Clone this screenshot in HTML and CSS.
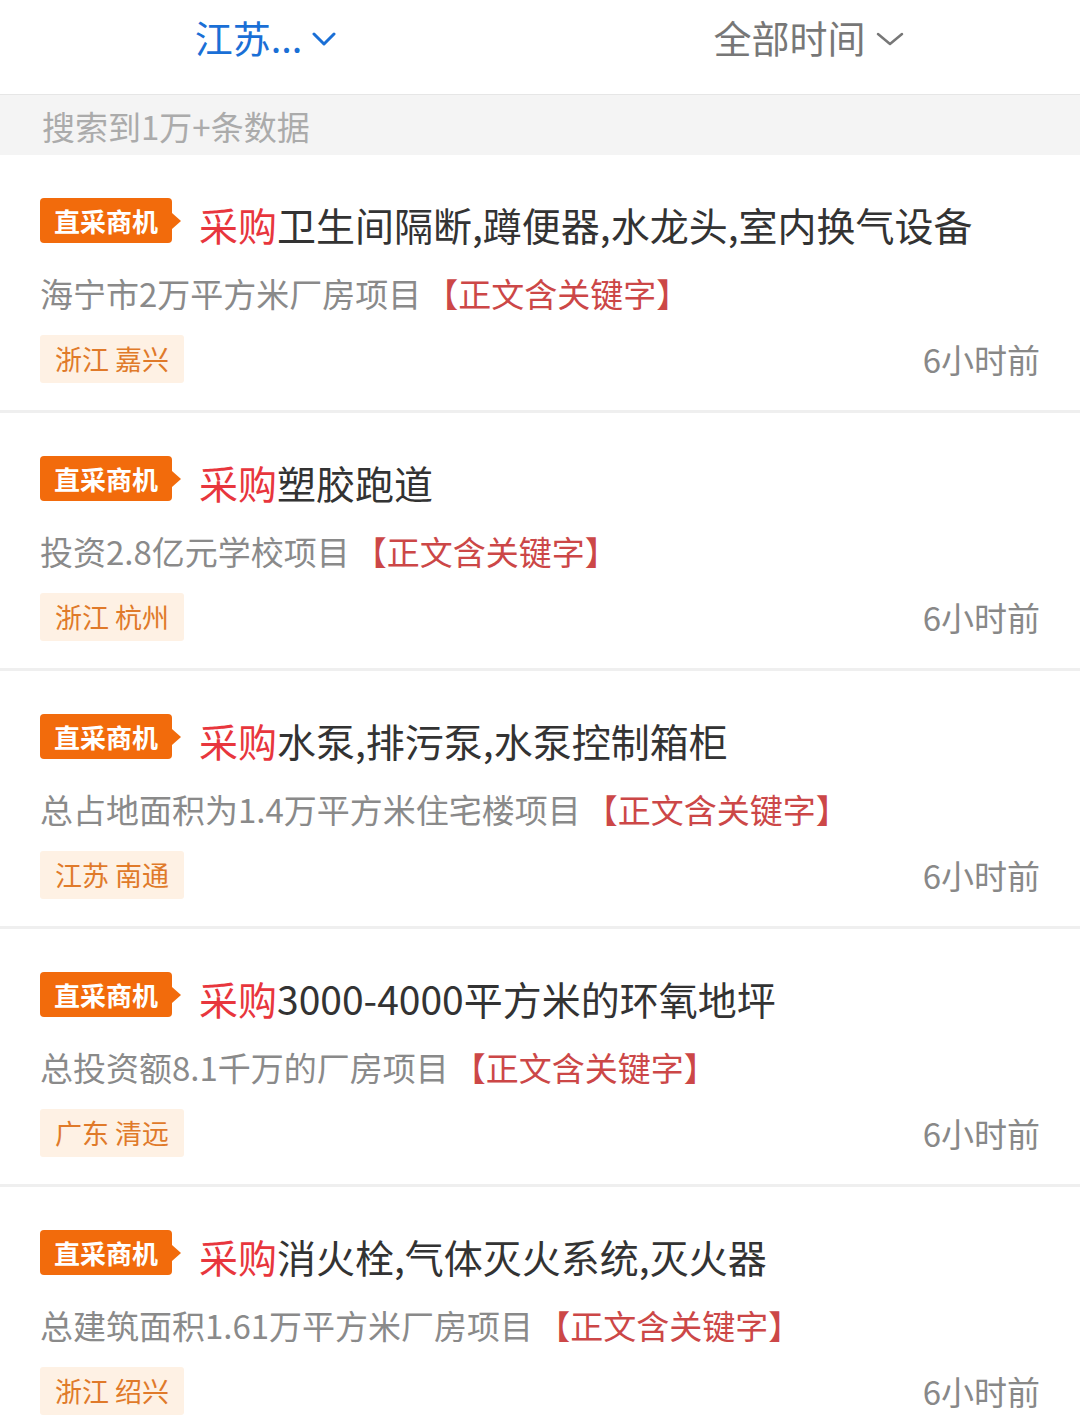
FILE: index.html
```html
<!DOCTYPE html>
<html lang="zh-CN">
<head>
    <meta charset="utf-8">
    <title>直采商机</title>
    <link rel="stylesheet" href="styles.css">
</head>
<body>
    <div class="filter-bar">
        <div class="filter active">
            <span>江苏...</span>
            <svg class="chevron" width="24" height="14" viewBox="0 0 24 14"><path d="M2 2 L12 12 L22 2" fill="none" stroke="currentColor" stroke-width="3" stroke-linecap="round" stroke-linejoin="round"/></svg>
        </div>
        <div class="filter">
            <span>全部时间</span>
            <svg class="chevron" width="28" height="14" viewBox="0 0 28 14"><path d="M2 2 L14 12 L26 2" fill="none" stroke="currentColor" stroke-width="2.5" stroke-linecap="round" stroke-linejoin="round"/></svg>
        </div>
    </div>

    <div class="result-count">搜索到1万+条数据</div>

    <!-- list of opportunities -->
    <div class="list">
        <div class="card">
            <div class="card-head">
                <span class="badge">直采商机</span>
                <span class="title"><em>采购</em>卫生间隔断,蹲便器,水龙头,室内换气设备</span>
            </div>
            <div class="project">海宁市2万平方米厂房项目<span class="keyword">【正文含关键字】</span></div>
            <div class="card-foot">
                <span class="region">浙江 嘉兴</span>
                <span class="time">6小时前</span>
            </div>
        </div>

        <div class="card">
            <div class="card-head">
                <span class="badge">直采商机</span>
                <span class="title"><em>采购</em>塑胶跑道</span>
            </div>
            <div class="project">投资2.8亿元学校项目<span class="keyword">【正文含关键字】</span></div>
            <div class="card-foot">
                <span class="region">浙江 杭州</span>
                <span class="time">6小时前</span>
            </div>
        </div>

        <div class="card">
            <div class="card-head">
                <span class="badge">直采商机</span>
                <span class="title"><em>采购</em>水泵,排污泵,水泵控制箱柜</span>
            </div>
            <div class="project">总占地面积为1.4万平方米住宅楼项目<span class="keyword">【正文含关键字】</span></div>
            <div class="card-foot">
                <span class="region">江苏 南通</span>
                <span class="time">6小时前</span>
            </div>
        </div>

        <div class="card">
            <div class="card-head">
                <span class="badge">直采商机</span>
                <span class="title"><em>采购</em>3000-4000平方米的环氧地坪</span>
            </div>
            <div class="project">总投资额8.1千万的厂房项目<span class="keyword">【正文含关键字】</span></div>
            <div class="card-foot">
                <span class="region">广东 清远</span>
                <span class="time">6小时前</span>
            </div>
        </div>

        <div class="card">
            <div class="card-head">
                <span class="badge">直采商机</span>
                <span class="title"><em>采购</em>消火栓,气体灭火系统,灭火器</span>
            </div>
            <div class="project">总建筑面积1.61万平方米厂房项目<span class="keyword">【正文含关键字】</span></div>
            <div class="card-foot">
                <span class="region">浙江 绍兴</span>
                <span class="time">6小时前</span>
            </div>
        </div>
    </div>
</body>
</html>
```

FILE: styles.css
```css
html, body {
    margin: 0;
    padding: 0;
}
body {
    font-family: "Noto Sans CJK SC", "Noto Sans", sans-serif;
    background: #fff;
    color: #333;
    overflow: hidden;
}
.filter-bar {
    display: flex;
    height: 94px;
    border-bottom: 1px solid #e6e6e6;
}
.filter {
    flex: 1;
    display: flex;
    justify-content: center;
    align-items: center;
    height: 72px;
    font-size: 38px;
    color: #777;
    padding-right: 6px;
}
.filter.active {
    color: #1a6fd6;
    padding-right: 12px;
}
.filter .chevron {
    margin-left: 10px;
    margin-top: 6px;
}
.result-count {
    height: 60px;
    line-height: 62px;
    background: #f4f4f4;
    color: #ababab;
    font-size: 33px;
    padding-left: 42px;
}
.card {
    padding: 43px 40px 27px 40px;
    border-bottom: 3px solid #efefef;
}
.card-head {
    display: flex;
    align-items: center;
    height: 45px;
}
.badge {
    position: relative;
    height: 45px;
    line-height: 45px;
    padding: 0 14px;
    background: #f26b0c;
    color: #fff;
    font-size: 26px;
    font-weight: bold;
    border-radius: 4px;
    margin-right: 27px;
}
.badge::after {
    content: "";
    position: absolute;
    right: -9px;
    top: 50%;
    margin-top: -8px;
    border-left: 9px solid #f26b0c;
    border-top: 8px solid transparent;
    border-bottom: 8px solid transparent;
}
.title {
    font-size: 39px;
    color: #333;
    white-space: nowrap;
    padding-top: 6px;
}
.title em {
    font-style: normal;
    color: #e8363d;
}
.project {
    margin-top: 28px;
    line-height: 44px;
    font-size: 33px;
    color: #8a8a8a;
    white-space: nowrap;
}
.keyword {
    color: #cc4747;
    margin-left: 4px;
}
.card-foot {
    display: flex;
    justify-content: space-between;
    align-items: center;
    margin-top: 20px;
    height: 48px;
}
.region {
    height: 48px;
    line-height: 48px;
    padding: 0 15px;
    background: #fef1e4;
    color: #e07a2a;
    font-size: 27px;
    border-radius: 3px;
}
.time {
    font-size: 33px;
    color: #888;
}
```
